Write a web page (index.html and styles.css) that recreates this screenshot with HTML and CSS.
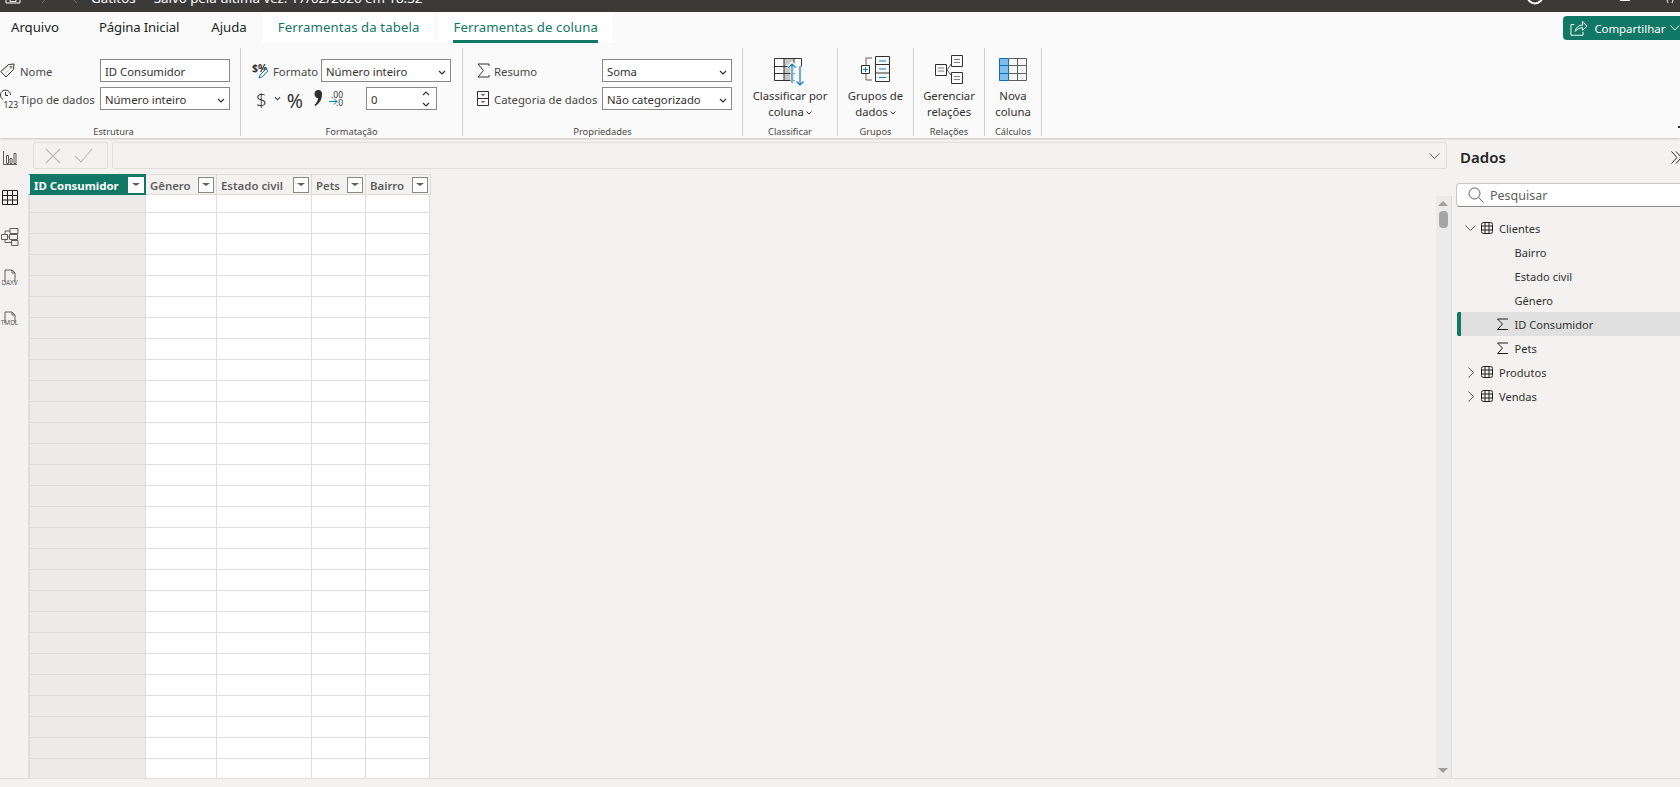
FILE: index.html
```html
<!DOCTYPE html>
<html lang="pt-BR">
<head>
<meta charset="utf-8">
<title>Gatitos</title>
<link rel="stylesheet" href="styles.css">
</head>
<body>
<div class="app">
  <header class="titlebar">
    <svg class="tb-save" width="16" height="4" viewBox="0 0 16 4"><path d="M1 0v3h14V0M5 0v1.5h6V0" fill="none" stroke="#fff"/></svg>
    <svg class="tb-undo" width="8" height="4" viewBox="0 0 8 4"><path d="M1 3l3-3" fill="none" stroke="#6e6c6a"/></svg>
    <svg class="tb-redo" width="8" height="4" viewBox="0 0 8 4"><path d="M6 3L3 0" fill="none" stroke="#6e6c6a"/></svg>
    <div class="tb-title">Gatitos &nbsp;-&nbsp; Salvo pela última vez: 17/02/2026 em 18:32</div>
    <svg class="tb-user" width="20" height="5" viewBox="0 0 20 5"><circle cx="10" cy="-4" r="7.5" fill="none" stroke="#fff" stroke-width="2"/></svg>
    <svg class="tb-min" width="10" height="2" viewBox="0 0 10 2"><path d="M0 0h10v1H0z" fill="#fff"/></svg>
    <svg class="tb-close" width="8" height="3" viewBox="0 0 8 3"><path d="M1 0l1 3M7 0L6 3" fill="none" stroke="#fff"/></svg>
  </header>

  <section class="ribbon">
    <nav class="tabs">
      <span class="tab tab-arq">Arquivo</span>
      <span class="tab tab-pag">Página Inicial</span>
      <span class="tab tab-aju">Ajuda</span>
      <span class="tab tab-ctx tab-tab"><span class="tab-in">Ferramentas da tabela</span></span>
      <span class="tab tab-ctx tab-col"><span class="tab-in tab-on">Ferramentas de coluna</span></span>
      <span class="share">
        <svg width="18" height="16" viewBox="0 0 18 16"><path d="M1 4.500v11h12.500v-3.500M1 4.500h3.500M5.500 11.500c.5-4 3.500-6.500 7.500-6.500V1.200l4.500 4.800-4.500 4.500V7.700c-3 0-5.500 1.300-7.500 3.800z" fill="none" stroke="#fff" stroke-width="1"/></svg>
        <span>Compartilhar</span>
        <svg width="10" height="6" viewBox="0 0 10 6"><path d="M.5.500L5 5 9.500.500" fill="none" stroke="#fff"/></svg>
      </span>
    </nav>
    <div class="groups">
      <div class="group g1">
        <div class="g-body form f1">
          <svg class="ic" width="16" height="16" viewBox="0 0 16 16"><path d="M.8 8.500L8.500 1.500l5.500-.5-.5 5.500L6 14z" fill="none" stroke="#323130"/><circle cx="11" cy="4" r="1" fill="none" stroke="#323130" stroke-width=".7"/><path d="M3 8l6-5.500M5 10.500l6-5.500" stroke="#a19f9d" stroke-width=".6"/></svg>
          <label>Nome</label>
          <span class="field">ID Consumidor</span>
          <svg class="ic" width="17" height="19" viewBox="0 0 17 19"><path d="M2.800 10.300A5 5 0 1 1 10.500 6M5.500 3v3.500H8" fill="none" stroke="#323130"/><text x="3.500" y="18.500" class="ic-num">123</text></svg>
          <label>Tipo de dados</label>
          <span class="field select">Número inteiro<svg class="chev" width="8" height="5" viewBox="0 0 8 5"><path d="M1 1l3 3 3-3" fill="none" stroke="#323130" stroke-width="1.200"/></svg></span>
        </div>
        <div class="g-label">Estrutura</div>
      </div>
      <div class="group g2">
        <div class="g-body f2">
          <div class="f2-row">
            <svg class="ic" width="17" height="18" viewBox="0 0 17 18"><text x="0" y="10" class="ic-fmt">$%</text><path d="M7 16l1-3 6-6 2 2-6 6z" fill="#fff" stroke="#0f7cc4"/></svg>
            <label class="lab-fmt">Formato</label>
            <span class="field select">Número inteiro<svg class="chev" width="8" height="5" viewBox="0 0 8 5"><path d="M1 1l3 3 3-3" fill="none" stroke="#323130" stroke-width="1.200"/></svg></span>
          </div>
          <div class="f2-row fmt-row">
            <span class="big-sym dollar">$</span>
            <svg class="fmt-chev" width="7" height="5" viewBox="0 0 8 5"><path d="M1 1l3 3 3-3" fill="none" stroke="#323130" stroke-width="1.200"/></svg>
            <span class="big-sym pct">%</span>
            <svg class="comma" width="10" height="17" viewBox="0 0 10 17"><path d="M1.500 4a3.800 3.800 0 1 1 7.500 .5c0 5-2.500 9-6.500 11.500l-1-1.200C3.500 13 5 11 5 8 3 8.200 1.500 6.300 1.500 4z" fill="#323130"/></svg>
            <svg class="dec" width="17" height="17" viewBox="0 0 17 17"><text x="2" y="7.500" class="ic-dec">.00</text><text x="7" y="16" class="ic-dec">.0</text><path d="M0 11.500h8M5 8.500l3 3-3 3" fill="none" stroke="#0f7cc4"/></svg>
            <span class="field spin">0
              <svg class="spin-a" width="8" height="16" viewBox="0 0 8 16"><path d="M1 4l3-3 3 3M1 12l3 3 3-3" fill="none" stroke="#323130" stroke-width="1.100"/></svg>
            </span>
          </div>
        </div>
        <div class="g-label">Formatação</div>
      </div>
      <div class="group g3">
        <div class="g-body form f3">
          <svg class="ic" width="13" height="15" viewBox="0 0 13 15"><path d="M12 3V1H1l5.500 6.500L1 14h11v-2" fill="none" stroke="#323130"/></svg>
          <label>Resumo</label>
          <span class="field select">Soma<svg class="chev" width="8" height="5" viewBox="0 0 8 5"><path d="M1 1l3 3 3-3" fill="none" stroke="#323130" stroke-width="1.200"/></svg></span>
          <svg class="ic" width="12" height="15" viewBox="0 0 12 15"><path d="M.5.500h11v14H.5zM.5 7.500h11M5 3v1h2V3M5 10v1h2v-1" fill="none" stroke="#323130"/></svg>
          <label>Categoria de dados</label>
          <span class="field select">Não categorizado<svg class="chev" width="8" height="5" viewBox="0 0 8 5"><path d="M1 1l3 3 3-3" fill="none" stroke="#323130" stroke-width="1.200"/></svg></span>
        </div>
        <div class="g-label">Propriedades</div>
      </div>
      <div class="group g4">
        <div class="g-body big">
          <svg class="big-ic ic-sort" width="32" height="28" viewBox="0 0 32 28"><path d="M10 1h10v21H10z" fill="#c8c6c4"/><path d="M.5.500h27M.5 8.500h22M.5 15.500h20M.5 22.500h20M.5.500v22M10 .500v22M20 .500v6M27.500.500v8" fill="none" stroke="#323130"/><path d="M18 5v21M14 9l4-4 4 4" fill="none" stroke="#fff" stroke-width="3"/><path d="M18 6v19M14.500 9.500L18 6l3.500 3.500M26 8v19M22.500 23.500L26 27l3.500-3.500" fill="none" stroke="#0f7cc4" stroke-width="1.200"/></svg>
          <div class="big-t">Classificar por</div>
          <div class="big-t">coluna<svg class="mini" width="6" height="4" viewBox="0 0 6 4"><path d="M.5.500L3 3 5.500.500" fill="none" stroke="#323130"/></svg></div>
        </div>
        <div class="g-label">Classificar</div>
      </div>
      <div class="group g5">
        <div class="g-body big">
          <svg class="big-ic ic-grp" width="30" height="28" viewBox="0 0 30 28"><path d="M14.500 1.500h14v25h-14zM14.500 9.500h14M14.500 18h14" fill="none" stroke="#323130"/><path d="M18 6h7M18 14h7M18 22.500h7" stroke="#0f7cc4" stroke-width="1.200"/><path d="M11 3H5v7M5 18v7h6" fill="none" stroke="#605e5c"/><path d="M.5 10.500h8v8h-8z" fill="none" stroke="#323130"/><path d="M4.500 12v5M2 14.500h5" stroke="#0f7cc4"/></svg>
          <div class="big-t">Grupos de</div>
          <div class="big-t">dados<svg class="mini" width="6" height="4" viewBox="0 0 6 4"><path d="M.5.500L3 3 5.500.500" fill="none" stroke="#323130"/></svg></div>
        </div>
        <div class="g-label">Grupos</div>
      </div>
      <div class="group g6">
        <div class="g-body big">
          <svg class="big-ic ic-rel" width="28" height="29" viewBox="0 0 28 29"><path d="M16.500.500h11v11h-11zM16.500 17.500h11v11h-11zM.5 9.500h11v11H.5z" fill="none" stroke="#323130"/><path d="M19 4.500h6M19 7.500h6M19 21.500h6M19 24.500h6M3 13h6M3 16h6" stroke="#605e5c" stroke-width=".8"/><path d="M16 9l-4 6 4 5" fill="none" stroke="#605e5c"/></svg>
          <div class="big-t">Gerenciar</div>
          <div class="big-t">relações</div>
        </div>
        <div class="g-label">Relações</div>
      </div>
      <div class="group g7">
        <div class="g-body big">
          <svg class="big-ic ic-new" width="28" height="23" viewBox="0 0 28 23"><path d="M.5.500h9v22h-9z" fill="#83bdeb"/><path d="M.5.500h9v22h-9zM.5 7.500h9M.5 15.500h9" fill="none" stroke="#0f6cbd" stroke-width="1"/><path d="M18.500.500v22M9.500 7.500h18M9.500 15.500h18M27.500.500v22M9.500.500h18M9.500 22.500h18" fill="none" stroke="#605e5c"/></svg>
          <div class="big-t">Nova</div>
          <div class="big-t">coluna</div>
        </div>
        <div class="g-label">Cálculos</div>
      </div>
      <div class="ribbon-pin"></div>
    </div>
  </section>

  <main class="main">
    <aside class="rail">
      <svg width="14" height="14" viewBox="0 0 14 14"><path d="M.5 0v13.500H14M3.500 4.500h2v8h-2zM7 7.500h2v5H7zM11 2.500h2v10h-2z" fill="none" stroke="#605e5c"/></svg>
      <svg class="rail-on" width="16" height="15" viewBox="0 0 16 15"><path d="M.5.500h15v14H.5zM.5 5.500h15M.5 10h15M5.500 1v14M10.500 1v14" fill="none" stroke="#201f1e"/></svg>
      <svg class="rail-model" width="18" height="18" viewBox="0 0 18 18"><path d="M9 .5h8v5H9zM10.500 12.500h6.500v5h-6.500zM8.500 6.500h8v5h-8zM.5 6.500h6v5h-6zM4 6.500V3h5M4 11.500v3h6M6.500 9h2" fill="none" stroke="#605e5c"/></svg>
      <div class="doc"><svg width="12" height="14" viewBox="0 0 12 14"><path d="M1 13V1h7l3 3v9M8 1v3h3" fill="none" stroke="#605e5c"/></svg><span>DAXV</span></div>
      <div class="doc doc2"><svg width="12" height="12" viewBox="0 0 12 12"><path d="M1 12V1h7l3 3v8M8 1v3h3" fill="none" stroke="#605e5c"/></svg><span>TMDL</span></div>
    </aside>

    <div class="center">
      <div class="formula">
        <div class="f-btns">
          <svg width="16" height="16" viewBox="0 0 16 16"><path d="M1 1l14 14M15 1L1 15" stroke="#bdbbb9" stroke-width="1.100"/></svg>
          <svg width="19" height="15" viewBox="0 0 19 15"><path d="M1 8l6 6L18 1" fill="none" stroke="#bdbbb9" stroke-width="1.100"/></svg>
        </div>
        <div class="f-input"><svg width="11" height="6" viewBox="0 0 11 6"><path d="M.5.500l5 5 5-5" fill="none" stroke="#605e5c"/></svg></div>
      </div>
      <div class="work">
        <div class="table-wrap">
          <table class="grid">
            <colgroup><col class="c1"><col class="c2"><col class="c3"><col class="c4"><col class="c5"></colgroup>
            <thead>
              <tr>
                <th class="th-on"><span>ID Consumidor</span><i class="flt"></i></th>
                <th><span>Gênero</span><i class="flt"></i></th>
                <th><span>Estado civil</span><i class="flt"></i></th>
                <th><span>Pets</span><i class="flt"></i></th>
                <th><span>Bairro</span><i class="flt"></i></th>
              </tr>
            </thead>
            <tbody>
              <tr class="first"><td></td><td></td><td></td><td></td><td></td></tr>
              <tr><td></td><td></td><td></td><td></td><td></td></tr>
              <tr><td></td><td></td><td></td><td></td><td></td></tr>
              <tr><td></td><td></td><td></td><td></td><td></td></tr>
              <tr><td></td><td></td><td></td><td></td><td></td></tr>
              <tr><td></td><td></td><td></td><td></td><td></td></tr>
              <tr><td></td><td></td><td></td><td></td><td></td></tr>
              <tr><td></td><td></td><td></td><td></td><td></td></tr>
              <tr><td></td><td></td><td></td><td></td><td></td></tr>
              <tr><td></td><td></td><td></td><td></td><td></td></tr>
              <tr><td></td><td></td><td></td><td></td><td></td></tr>
              <tr><td></td><td></td><td></td><td></td><td></td></tr>
              <tr><td></td><td></td><td></td><td></td><td></td></tr>
              <tr><td></td><td></td><td></td><td></td><td></td></tr>
              <tr><td></td><td></td><td></td><td></td><td></td></tr>
              <tr><td></td><td></td><td></td><td></td><td></td></tr>
              <tr><td></td><td></td><td></td><td></td><td></td></tr>
              <tr><td></td><td></td><td></td><td></td><td></td></tr>
              <tr><td></td><td></td><td></td><td></td><td></td></tr>
              <tr><td></td><td></td><td></td><td></td><td></td></tr>
              <tr><td></td><td></td><td></td><td></td><td></td></tr>
              <tr><td></td><td></td><td></td><td></td><td></td></tr>
              <tr><td></td><td></td><td></td><td></td><td></td></tr>
              <tr><td></td><td></td><td></td><td></td><td></td></tr>
              <tr><td></td><td></td><td></td><td></td><td></td></tr>
              <tr><td></td><td></td><td></td><td></td><td></td></tr>
              <tr><td></td><td></td><td></td><td></td><td></td></tr>
              <tr><td></td><td></td><td></td><td></td><td></td></tr>
            </tbody>
          </table>
        </div>
        <div class="scroll">
          <i class="arr-up"></i>
          <i class="thumb"></i>
          <i class="arr-down"></i>
        </div>
      </div>
    </div>

    <aside class="pane">
      <div class="pane-head">
        <h2>Dados</h2>
        <svg width="11" height="13" viewBox="0 0 11 13"><path d="M.5.500L6 6.500l-5.500 6M5 .500l5.500 6-5.500 6" fill="none" stroke="#323130"/></svg>
      </div>
      <div class="search">
        <svg width="16" height="16" viewBox="0 0 16 16"><circle cx="6.500" cy="6.500" r="5.500" fill="none" stroke="#605e5c"/><path d="M10.500 10.500l5 5" stroke="#605e5c"/></svg>
        <span>Pesquisar</span>
      </div>
      <ul class="tree">
        <li class="t-table"><svg class="tw" width="11" height="6" viewBox="0 0 11 6"><path d="M.5.500l5 5 5-5" fill="none" stroke="#605e5c"/></svg><svg class="tbl" width="12" height="12" viewBox="0 0 12 12"><rect x=".5" y=".5" width="11" height="11" rx="2" fill="none" stroke="#201f1e"/><path d="M4 .5v11M8 .5v11M.5 4h11M.5 8h11" stroke="#201f1e"/></svg><span>Clientes</span></li>
        <li class="t-col">Bairro</li>
        <li class="t-col">Estado civil</li>
        <li class="t-col">Gênero</li>
        <li class="t-col t-sel"><svg class="sig" width="11" height="12" viewBox="0 0 11 12"><path d="M11 1H.5l5 5-5 5.500H11" fill="none" stroke="#201f1e"/></svg>ID Consumidor</li>
        <li class="t-col"><svg class="sig" width="11" height="12" viewBox="0 0 11 12"><path d="M11 1H.5l5 5-5 5.500H11" fill="none" stroke="#201f1e"/></svg>Pets</li>
        <li class="t-table"><svg class="tw tw-r" width="6" height="11" viewBox="0 0 6 11"><path d="M.5.500l5 5-5 5" fill="none" stroke="#605e5c"/></svg><svg class="tbl" width="12" height="12" viewBox="0 0 12 12"><rect x=".5" y=".5" width="11" height="11" rx="2" fill="none" stroke="#201f1e"/><path d="M4 .5v11M8 .5v11M.5 4h11M.5 8h11" stroke="#201f1e"/></svg><span>Produtos</span></li>
        <li class="t-table"><svg class="tw tw-r" width="6" height="11" viewBox="0 0 6 11"><path d="M.5.500l5 5-5 5" fill="none" stroke="#605e5c"/></svg><svg class="tbl" width="12" height="12" viewBox="0 0 12 12"><rect x=".5" y=".5" width="11" height="11" rx="2" fill="none" stroke="#201f1e"/><path d="M4 .5v11M8 .5v11M.5 4h11M.5 8h11" stroke="#201f1e"/></svg><span>Vendas</span></li>
      </ul>
    </aside>
  </main>
  <footer class="status"></footer>
</div>
</body>
</html>
```
FILE: styles.css
```css
* { box-sizing: border-box; }
html, body { margin: 0; padding: 0; height: 100%; overflow: hidden; }
body { font-family: "Noto Sans", "Open Sans", sans-serif; color: #323130; background: #f3f2f1; }
.app { display: flex; flex-direction: column; width: 1680px; height: 787px; overflow: hidden; }

/* title bar, cropped at the top of the window */
.titlebar { flex: 0 0 12px; height: 12px; background: #3b3a39; display: flex; align-items: flex-start; overflow: hidden; }
.titlebar svg { display: block; flex: none; }
.tb-save { margin-left: 5px; }
.tb-undo { margin-left: 20px; }
.tb-redo { margin-left: 22px; }
.tb-title { margin: -8px 0 0 12px; color: #fff; font-size: 13.3px; line-height: 12px; white-space: nowrap; }
.tb-user { margin-left: auto; }
.tb-min { margin-left: 75px; }
.tb-close { margin: 0 6px 0 36px; }

/* ribbon */
.ribbon { flex: 0 0 126px; height: 126px; background: #fafafa; box-shadow: 0 1px 2px rgba(0,0,0,.18); display: flex; flex-direction: column; position: relative; z-index: 2; }
.tabs { display: flex; height: 31px; flex: none; font-size: 13.2px; }
.tab { display: flex; align-items: center; height: 31px; color: #201f1e; white-space: nowrap; padding-bottom: 1px; }
.tab-arq { margin-left: 11px; }
.tab-pag { margin-left: 40px; letter-spacing: -.15px; }
.tab-aju { margin-left: 32px; }
.tab-ctx { background: #fff; color: #117865; padding: 0 15px; letter-spacing: .1px; }
.tab-tab { margin-left: 16px; }
.tab-col { margin-left: 4px; }
.tab-in { height: 31px; line-height: 30px; }
.tab-on { border-bottom: 3px solid #117865; }
.share { margin: 4px 0 0 auto; width: 117px; height: 24px; background: #117865; border-radius: 4px 0 0 4px; color: #fff; display: flex; align-items: center; font-size: 11.4px; padding-left: 7px; }
.share svg:first-child { margin-right: 7px; }
.share svg:last-child { margin-left: 5px; }

.groups { display: flex; flex: 1; padding-top: 5px; padding-bottom: 2px; position: relative; }
.group { display: flex; flex-direction: column; border-right: 1px solid #d2d0ce; flex: none; }
.g-body { flex: 1; min-height: 0; font-size: 11.3px; }
.g-label { height: 12px; line-height: 15px; font-size: 9.300px; text-align: center; color: #484644; }
.g1 { width: 241px; }
.g1 .g-label { margin-right: 13px; }
.g2 { width: 222px; }
.g3 { width: 280px; }
.g4 { width: 95px; }
.g5 { width: 76px; }
.g6 { width: 71px; }
.g7 { width: 57px; }
.ribbon-pin { position: absolute; right: 0; bottom: 10px; width: 2px; height: 2px; background: #323130; }

.form { display: grid; row-gap: 5px; grid-auto-rows: 23px; align-items: center; padding-top: 11px; }
.f1 { grid-template-columns: 20px 80px 130px; }
.f3 { grid-template-columns: 17px 108px 130px; padding-left: 14px; }
.ic { display: block; overflow: visible; }
.ic-num { font: 8.5px "Noto Sans", sans-serif; fill: #323130; }
.ic-fmt { font: bold 10.5px "Noto Sans", sans-serif; fill: #323130; }
.ic-dec { font: 8.5px "Noto Sans", sans-serif; fill: #323130; }
label { color: #484644; white-space: nowrap; padding-top: 2px; }

.field { display: flex; align-items: center; height: 23px; width: 130px; background: #fff; border: 1px solid #8a8886; padding: 2px 0 0 4px; color: #323130; font-size: 11.3px; position: relative; white-space: nowrap; }
.select .chev { position: absolute; right: 4px; top: 10px; }

.f2 { padding: 11px 0 0 11px; display: flex; flex-direction: column; row-gap: 5px; }
.f2-row { display: flex; align-items: center; height: 23px; }
.lab-fmt { margin-left: 4px; width: 48px; }
.big-sym { font-size: 19px; font-weight: 300; line-height: 23px; color: #323130; margin-top: 3px; }
.dollar { margin-left: 4px; }
.fmt-chev { margin-left: 7px; }
.pct { margin-left: 6px; font-weight: 400; font-size: 19.500px; }
.comma { margin-left: 10px; }
.dec { margin-left: 6px; overflow: visible; }
.spin { width: 71px; margin-left: 20px; }
.spin-a { position: absolute; right: 6px; top: 3px; }

.big { display: flex; flex-direction: column; align-items: center; position: relative; }
.big-ic { display: block; flex: none; }
.big-t { font-size: 11.3px; line-height: 16px; color: #323130; white-space: nowrap; display: flex; align-items: center; }
.mini { margin-left: 2px; margin-top: 2px; }
.ic-sort { margin: 10px 0 2px; }
.ic-grp { margin: 7px 0 5px; }
.ic-rel { margin: 7px 0 4px; }
.ic-new { margin: 10px 0 7px; }

/* main */
.main { flex: 1; display: flex; min-height: 0; }
.rail { flex: 0 0 28px; width: 28px; display: flex; flex-direction: column; align-items: center; padding-top: 13px; padding-right: 9px; overflow: visible; }
.rail svg { display: block; flex: none; }
.rail-on { margin-top: 25px; }
.rail-model { margin-top: 23px; }
.doc { margin-top: 23px; display: flex; flex-direction: column; align-items: center; width: 20px; }
.doc span { font-size: 6.500px; line-height: 6px; color: #605e5c; margin-top: -3px; letter-spacing: -.1px; }
.doc2 { margin-top: 25px; }

.center { flex: 1; min-width: 0; display: flex; flex-direction: column; }
.formula { flex: none; display: flex; height: 36px; padding: 4px 5px 0; gap: 4px; }
.f-btns { width: 75px; height: 27px; background: #f3f2f1; border: 1px solid #e1dfdd; border-radius: 2px; display: flex; align-items: center; padding-left: 11px; gap: 13px; }
.f-input { flex: 1; height: 27px; border: 1px solid #e1dfdd; border-radius: 2px; display: flex; align-items: center; justify-content: flex-end; padding-right: 6px; }
.work { flex: 1; min-height: 0; display: flex; }
.table-wrap { flex: 1; min-width: 0; overflow: hidden; }
.grid { border-collapse: separate; border-spacing: 0; table-layout: fixed; width: 403px; }
.c1 { width: 118px; } .c2 { width: 71px; } .c3 { width: 95px; } .c4 { width: 54px; } .c5 { width: 65px; }
.grid th { height: 21px; padding: 2px 0 0 4px; background: #f3f2f1; border-right: 1px solid #dcdad8; border-bottom: 1px solid #dcdad8; border-top: 1px solid #e1dfdd; font-size: 11.4px; font-weight: 600; text-align: left; color: #605e5c; position: relative; white-space: nowrap; }
.grid th:first-child { padding-left: 4px; border-left: 2px solid #f3f2f1; }
.grid th.th-on { background: #117865; color: #fff; border-color: #117865; border-left-color: #f3f2f1; font-weight: 700; }
.flt { position: absolute; right: 2px; top: 2px; width: 16px; height: 16px; background: #fff; border: 1px solid #8a8886; }
.flt::after { content: ""; position: absolute; left: 3px; top: 5px; border: 4px solid transparent; border-top: 3px solid #605e5c; border-bottom: 0; }
.th-on .flt { border-color: #fff; top: 2px; right: 1px; }
.grid td { height: 21px; padding: 0; background: #fff; border-right: 1px solid #dedede; border-bottom: 1px solid #dedede; }
.grid td:first-child { background: #ecebe9; border-left: 2px solid #e1dfdd; }
.grid td:last-child { border-right-color: #f3f2f1; box-shadow: inset -1px 0 0 #dedede; }
.grid tr.first td { height: 18px; }
.scroll { flex: 0 0 16px; width: 16px; margin-top: 22px; background: #ebebeb; border-right: 1px solid #dedede; position: relative; display: flex; flex-direction: column; align-items: center; padding: 5px 1px 5px 0; }
.arr-up { flex: none; border: 5px solid transparent; border-top: 0; border-bottom: 5px solid #a19f9d; width: 0; height: 0; }
.thumb { flex: none; width: 9px; height: 17px; margin-top: 5px; background: #a6a6a6; border-radius: 4px; }
.arr-down { flex: none; margin-top: auto; border: 5px solid transparent; border-bottom: 0; border-top: 5px solid #a19f9d; width: 0; height: 0; }

.pane { flex: 0 0 228px; width: 228px; padding: 0 0 0 4px; }
.pane-head { height: 45px; display: flex; align-items: center; justify-content: space-between; padding: 0 0 7px 4px; }
.pane-head h2 { margin: 0; font-size: 15px; font-weight: 600; color: #252423; }
.pane-head svg { flex: none; margin-right: -2px; }
.search { height: 24px; background: #fff; border: 1px solid #c8c6c4; border-right: 0; border-bottom-color: #8a8886; border-radius: 4px 0 0 4px; display: flex; align-items: center; padding-left: 11px; font-size: 12.5px; color: #605e5c; }
.search span { margin-left: 6px; }
.tree { list-style: none; margin: 9px 0 0 1px; padding: 0; font-size: 11.1px; color: #323130; }
.tree li { height: 24px; display: flex; align-items: center; position: relative; white-space: nowrap; }
.t-table { padding-left: 8px; }
.tw { width: 11px; flex: none; }
.tw-r { width: 6px; margin: 0 2.500px; }
.tbl { flex: none; margin-left: 5px; margin-right: 6px; }
.t-col { padding-left: 57.500px; }
.sig { position: absolute; left: 40px; top: 6px; }
.t-sel { background: #e0e0e0; }
.t-sel::before { content: ""; position: absolute; left: 0; top: 0; bottom: 0; width: 4px; background: #117865; border-radius: 2px 0 0 2px; }
.status { flex: 0 0 9px; border-top: 1px solid #dedede; background: #f3f2f1; }
```
